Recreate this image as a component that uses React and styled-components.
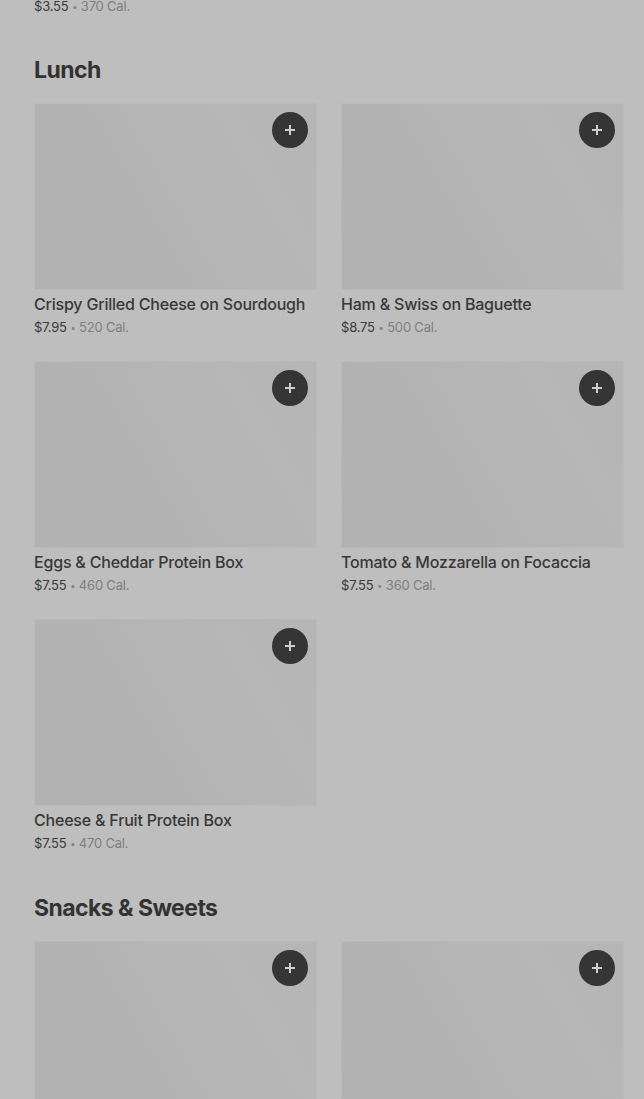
import React from 'react';
import styled, { createGlobalStyle } from 'styled-components';

const lunch = [
  { name: 'Crispy Grilled Cheese on Sourdough', price: '$7.95', cal: '520 Cal.' },
  { name: 'Ham & Swiss on Baguette', price: '$8.75', cal: '500 Cal.' },
  { name: 'Eggs & Cheddar Protein Box', price: '$7.55', cal: '460 Cal.' },
  { name: 'Tomato & Mozzarella on Focaccia', price: '$7.55', cal: '360 Cal.' },
  { name: 'Cheese & Fruit Protein Box', price: '$7.55', cal: '470 Cal.' },
];

const snacks = [
  { name: 'Salted Caramel Cookie', price: '$2.95', cal: '380 Cal.' },
  { name: 'Chocolate Brownie', price: '$3.45', cal: '420 Cal.' },
];

function PlusIcon() {
  return (
    <svg width="12" height="12" viewBox="0 0 12 12">
      <path d="M6 1v10M1 6h10" stroke="#cfcfcf" strokeWidth="2" />
    </svg>
  );
}

function Item({ item }) {
  return (
    <Card>
      <Thumb>
        <AddButton aria-label="Add">
          <PlusIcon />
        </AddButton>
      </Thumb>
      <Title>{item.name}</Title>
      <Meta>
        {item.price} <Dot>•</Dot> <Cal>{item.cal}</Cal>
      </Meta>
    </Card>
  );
}

function Section({ title, items }) {
  return (
    <SectionWrap>
      <Heading>{title}</Heading>
      <Grid>
        {items.map((item) => (
          <Item key={item.name} item={item} />
        ))}
      </Grid>
    </SectionWrap>
  );
}

export default function App() {
  return (
    <>
      <GlobalStyle />
      <Page>
        <TopMeta>
          $3.55 <Dot>•</Dot> <Cal>370 Cal.</Cal>
        </TopMeta>
        <Section title="Lunch" items={lunch} />
        <Section title="Snacks & Sweets" items={snacks} />
      </Page>
    </>
  );
}

const GlobalStyle = createGlobalStyle`
  html, body {
    margin: 0;
    background: #bebebe;
    overflow: hidden;
  }
  body {
    font-family: Inter, Roboto, "Liberation Sans", sans-serif;
    color: #363636;
  }
`;

const Page = styled.div`
  padding: 0 20px 0 34px;
  height: 1099px;
  overflow: hidden;
`;

const Meta = styled.div`
  margin-top: 1px;
  font-size: 13px;
  line-height: 20px;
  height: 20px;
  color: #3a3a3a;
  letter-spacing: -0.2px;
`;

const TopMeta = styled(Meta)`
  margin-top: -4px;
`;

const Dot = styled.span`
  color: #858585;
  font-size: 10px;
  line-height: 0;
  vertical-align: 1px;
`;

const Cal = styled.span`
  color: #7e7e7e;
`;

const SectionWrap = styled.section`
  margin-top: 38px;

  & + & {
    margin-top: 39px;
  }
`;

const Heading = styled.h2`
  margin: 0 0 17px;
  height: 32px;
  font-size: 23px;
  line-height: 32px;
  font-weight: 700;
  letter-spacing: -0.55px;
  color: #333;
`;

const Grid = styled.div`
  display: grid;
  grid-template-columns: 283px 283px;
  column-gap: 24px;
  row-gap: 24px;
`;

const Card = styled.div`
  display: flex;
  flex-direction: column;
`;

const Thumb = styled.div`
  position: relative;
  height: 187px;
  background: linear-gradient(60deg, #b2b2b2 0%, #b3b3b3 40%, #b7b7b7 75%, #b5b5b5 100%);
  box-shadow: inset 0 0 0 1px #b9b9b9;
`;

const AddButton = styled.button`
  position: absolute;
  top: 9px;
  right: 9px;
  width: 36px;
  height: 36px;
  border-radius: 50%;
  border: none;
  padding: 0;
  background: #353535;
  display: flex;
  align-items: center;
  justify-content: center;
  cursor: pointer;
`;

const Title = styled.div`
  margin-top: 2px;
  font-size: 16px;
  line-height: 24px;
  height: 24px;
  font-weight: 500;
  color: #383838;
  white-space: nowrap;
  letter-spacing: -0.2px;
`;
